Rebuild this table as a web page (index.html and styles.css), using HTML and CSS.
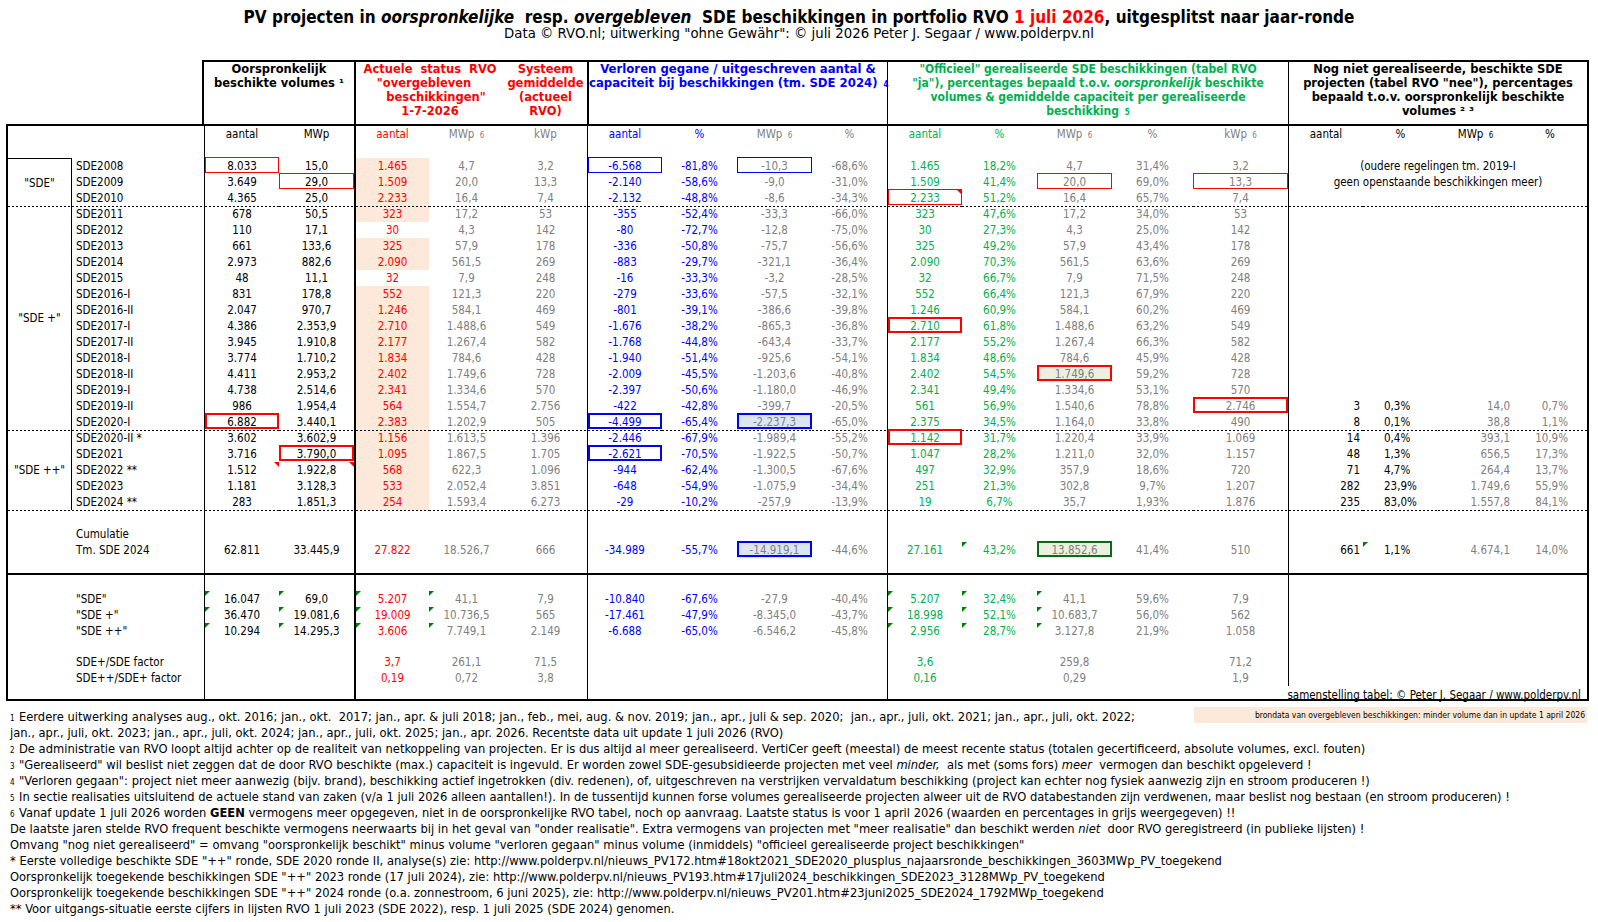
FILE: index.html
```html
<!DOCTYPE html>
<html lang="nl">
<head>
<meta charset="utf-8">
<title>PV projecten SDE beschikkingen</title>
<link rel="stylesheet" href="styles.css">
</head>
<body>
<div class="title">PV projecten in <i>oorspronkelijke</i>&nbsp; resp. <i>overgebleven</i>&nbsp; SDE beschikkingen in portfolio RVO <span class="red">1 juli 2026</span>, uitgesplitst naar jaar-ronde</div>
<div class="sub">Data © RVO.nl; uitwerking "ohne Gewähr": © juli 2026 Peter J. Segaar / www.polderpv.nl</div>

<div class="hdr">
  <div class="hc hk">Oorspronkelijk<br>beschikte volumes ¹</div>
  <div class="hc hr1">Actuele&nbsp; status&nbsp; RVO<br>"overgebleven&nbsp;&nbsp;&nbsp;<br>&nbsp;&nbsp;&nbsp;beschikkingen"<br>1-7-2026</div>
  <div class="hc hr2">Systeem<br>gemiddelde<br>(actueel<br>RVO)</div>
  <div class="hc hb">Verloren gegane / uitgeschreven aantal &amp;<br>capaciteit bij beschikkingen (tm. SDE 2024) <small class="fn">4</small></div>
  <div class="hc hg">"Officieel" gerealiseerde SDE beschikkingen (tabel RVO<br>"ja"), percentages bepaald t.o.v. <i>oorspronkelijk</i> beschikte<br>volumes &amp; gemiddelde capaciteit per gerealiseerde<br>beschikking <small class="fn">5</small></div>
  <div class="hc hn">Nog niet gerealiseerde, beschikte SDE<br>projecten (tabel RVO "nee"), percentages<br>bepaald t.o.v. oorspronkelijk beschikte<br>volumes ² ³</div>
</div>

<div class="sheet">
  <div class="r sh"><i></i><span>aantal</span><span>MWp</span><span>aantal</span><span>MWp <small>6</small></span><span>kWp</span><span>aantal</span><span>%</span><span>MWp <small>6</small></span><span>%</span><span>aantal</span><span>%</span><span>MWp <small>6</small></span><span>%</span><span>kWp <small>6</small></span><span>aantal</span><span>%</span><span>MWp <small>6</small></span><span>%</span></div>

  <div class="grp grp1">"SDE"</div>
  <div class="r"><span>SDE2008</span><span class="bx xr1">8.033</span><span>15,0</span><span class="pc">1.465</span><span>4,7</span><span>3,2</span><span class="bx xb1">-6.568</span><span>-81,8%</span><span class="bx xb1">-10,3</span><span>-68,6%</span><span>1.465</span><span>18,2%</span><span>4,7</span><span>31,4%</span><span>3,2</span><span class="ns">(oudere regelingen tm. 2019-I</span></div>
  <div class="r"><span>SDE2009</span><span>3.649</span><span class="bx xr1">29,0</span><span class="pc">1.509</span><span>20,0</span><span>13,3</span><span>-2.140</span><span>-58,6%</span><span>-9,0</span><span>-31,0%</span><span>1.509</span><span>41,4%</span><span class="bx xr1">20,0</span><span>69,0%</span><span class="bx xr1">13,3</span><span class="ns">geen openstaande beschikkingen meer)</span></div>
  <div class="r"><span>SDE2010</span><span>4.365</span><span>25,0</span><span class="pc">2.233</span><span>16,4</span><span>7,4</span><span>-2.132</span><span>-48,8%</span><span>-8,6</span><span>-34,3%</span><span class="bx xr1 tr">2.233</span><span>51,2%</span><span>16,4</span><span>65,7%</span><span>7,4</span><i></i><i></i><i></i><i></i></div>

  <div class="grp grp2 dt">"SDE +"</div>
  <div class="r dt"><span>SDE2011</span><span>678</span><span>50,5</span><span class="pc">323</span><span>17,2</span><span>53</span><span>-355</span><span>-52,4%</span><span>-33,3</span><span>-66,0%</span><span>323</span><span>47,6%</span><span>17,2</span><span>34,0%</span><span>53</span><i></i><i></i><i></i><i></i></div>
  <div class="r"><span>SDE2012</span><span>110</span><span>17,1</span><span>30</span><span>4,3</span><span>142</span><span>-80</span><span>-72,7%</span><span>-12,8</span><span>-75,0%</span><span>30</span><span>27,3%</span><span>4,3</span><span>25,0%</span><span>142</span><i></i><i></i><i></i><i></i></div>
  <div class="r"><span>SDE2013</span><span>661</span><span>133,6</span><span class="pc">325</span><span>57,9</span><span>178</span><span>-336</span><span>-50,8%</span><span>-75,7</span><span>-56,6%</span><span>325</span><span>49,2%</span><span>57,9</span><span>43,4%</span><span>178</span><i></i><i></i><i></i><i></i></div>
  <div class="r"><span>SDE2014</span><span>2.973</span><span>882,6</span><span class="pc">2.090</span><span>561,5</span><span>269</span><span>-883</span><span>-29,7%</span><span>-321,1</span><span>-36,4%</span><span>2.090</span><span>70,3%</span><span>561,5</span><span>63,6%</span><span>269</span><i></i><i></i><i></i><i></i></div>
  <div class="r"><span>SDE2015</span><span>48</span><span>11,1</span><span>32</span><span>7,9</span><span>248</span><span>-16</span><span>-33,3%</span><span>-3,2</span><span>-28,5%</span><span>32</span><span>66,7%</span><span>7,9</span><span>71,5%</span><span>248</span><i></i><i></i><i></i><i></i></div>
  <div class="r"><span>SDE2016-I</span><span>831</span><span>178,8</span><span class="pc">552</span><span>121,3</span><span>220</span><span>-279</span><span>-33,6%</span><span>-57,5</span><span>-32,1%</span><span>552</span><span>66,4%</span><span>121,3</span><span>67,9%</span><span>220</span><i></i><i></i><i></i><i></i></div>
  <div class="r"><span>SDE2016-II</span><span>2.047</span><span>970,7</span><span class="pc">1.246</span><span>584,1</span><span>469</span><span>-801</span><span>-39,1%</span><span>-386,6</span><span>-39,8%</span><span>1.246</span><span>60,9%</span><span>584,1</span><span>60,2%</span><span>469</span><i></i><i></i><i></i><i></i></div>
  <div class="r"><span>SDE2017-I</span><span>4.386</span><span>2.353,9</span><span class="pc">2.710</span><span>1.488,6</span><span>549</span><span>-1.676</span><span>-38,2%</span><span>-865,3</span><span>-36,8%</span><span class="bx xr2">2.710</span><span>61,8%</span><span>1.488,6</span><span>63,2%</span><span>549</span><i></i><i></i><i></i><i></i></div>
  <div class="r"><span>SDE2017-II</span><span>3.945</span><span>1.910,8</span><span class="pc">2.177</span><span>1.267,4</span><span>582</span><span>-1.768</span><span>-44,8%</span><span>-643,4</span><span>-33,7%</span><span>2.177</span><span>55,2%</span><span>1.267,4</span><span>66,3%</span><span>582</span><i></i><i></i><i></i><i></i></div>
  <div class="r"><span>SDE2018-I</span><span>3.774</span><span>1.710,2</span><span class="pc">1.834</span><span>784,6</span><span>428</span><span>-1.940</span><span>-51,4%</span><span>-925,6</span><span>-54,1%</span><span>1.834</span><span>48,6%</span><span>784,6</span><span>45,9%</span><span>428</span><i></i><i></i><i></i><i></i></div>
  <div class="r"><span>SDE2018-II</span><span>4.411</span><span>2.953,2</span><span class="pc">2.402</span><span>1.749,6</span><span>728</span><span>-2.009</span><span>-45,5%</span><span>-1.203,6</span><span>-40,8%</span><span>2.402</span><span>54,5%</span><span class="bx xr2 lg">1.749,6</span><span>59,2%</span><span>728</span><i></i><i></i><i></i><i></i></div>
  <div class="r"><span>SDE2019-I</span><span>4.738</span><span>2.514,6</span><span class="pc">2.341</span><span>1.334,6</span><span>570</span><span>-2.397</span><span>-50,6%</span><span>-1.180,0</span><span>-46,9%</span><span>2.341</span><span>49,4%</span><span>1.334,6</span><span>53,1%</span><span>570</span><i></i><i></i><i></i><i></i></div>
  <div class="r"><span>SDE2019-II</span><span>986</span><span>1.954,4</span><span class="pc">564</span><span>1.554,7</span><span>2.756</span><span>-422</span><span>-42,8%</span><span>-399,7</span><span>-20,5%</span><span>561</span><span>56,9%</span><span>1.540,6</span><span>78,8%</span><span class="bx xr2">2.746</span><span>3</span><span>0,3%</span><span>14,0</span><span>0,7%</span></div>
  <div class="r"><span>SDE2020-I</span><span class="bx xr2">6.882</span><span>3.440,1</span><span class="pc">2.383</span><span>1.202,9</span><span>505</span><span class="bx xb2">-4.499</span><span>-65,4%</span><span class="bx xb2 lb">-2.237,3</span><span>-65,0%</span><span>2.375</span><span>34,5%</span><span>1.164,0</span><span>33,8%</span><span>490</span><span>8</span><span>0,1%</span><span>38,8</span><span>1,1%</span></div>

  <div class="grp grp3 dt">"SDE ++"</div>
  <div class="r dt"><span>SDE2020-II *</span><span>3.602</span><span>3.602,9</span><span class="pc">1.156</span><span>1.613,5</span><span>1.396</span><span>-2.446</span><span>-67,9%</span><span>-1.989,4</span><span>-55,2%</span><span class="bx xr2">1.142</span><span>31,7%</span><span>1.220,4</span><span>33,9%</span><span>1.069</span><span>14</span><span>0,4%</span><span>393,1</span><span>10,9%</span></div>
  <div class="r"><span>SDE2021</span><span>3.716</span><span class="bx xr2">3.790,0</span><span class="pc">1.095</span><span>1.867,5</span><span>1.705</span><span class="bx xb2">-2.621</span><span>-70,5%</span><span>-1.922,5</span><span>-50,7%</span><span>1.047</span><span>28,2%</span><span>1.211,0</span><span>32,0%</span><span>1.157</span><span>48</span><span>1,3%</span><span>656,5</span><span>17,3%</span></div>
  <div class="r"><span>SDE2022 **</span><span class="tr">1.512</span><span class="tr">1.922,8</span><span class="pc">568</span><span>622,3</span><span>1.096</span><span>-944</span><span>-62,4%</span><span>-1.300,5</span><span>-67,6%</span><span>497</span><span>32,9%</span><span>357,9</span><span>18,6%</span><span>720</span><span>71</span><span>4,7%</span><span>264,4</span><span>13,7%</span></div>
  <div class="r"><span>SDE2023</span><span>1.181</span><span>3.128,3</span><span class="pc">533</span><span>2.052,4</span><span>3.851</span><span>-648</span><span>-54,9%</span><span>-1.075,9</span><span>-34,4%</span><span>251</span><span>21,3%</span><span>302,8</span><span>9,7%</span><span>1.207</span><span>282</span><span>23,9%</span><span>1.749,6</span><span>55,9%</span></div>
  <div class="r"><span>SDE2024 **</span><span>283</span><span>1.851,3</span><span class="pc">254</span><span>1.593,4</span><span>6.273</span><span>-29</span><span>-10,2%</span><span>-257,9</span><span>-13,9%</span><span>19</span><span>6,7%</span><span>35,7</span><span>1,93%</span><span>1.876</span><span>235</span><span>83,0%</span><span>1.557,8</span><span>84,1%</span></div>

  <div class="grp gx dt"></div>
  <div class="r dt"><i></i><i></i><i></i><i></i><i></i><i></i><i></i><i></i><i></i><i></i><i></i><i></i><i></i><i></i><i></i><i></i><i></i><i></i><i></i></div>
  <div class="r"><span>Cumulatie</span><i></i><i></i><i></i><i></i><i></i><i></i><i></i><i></i><i></i><i></i><i></i><i></i><i></i><i></i><i></i><i></i><i></i><i></i></div>
  <div class="r"><span>Tm. SDE 2024</span><span>62.811</span><span>33.445,9</span><span>27.822</span><span>18.526,7</span><span>666</span><span>-34.989</span><span>-55,7%</span><span class="bx xb2 lb">-14.919,1</span><span>-44,6%</span><span>27.161</span><span class="tg">43,2%</span><span class="bx xg2 lg">13.852,6</span><span>41,4%</span><span>510</span><span>661</span><span class="tg">1,1%</span><span>4.674,1</span><span>14,0%</span></div>
  <div class="r"><i></i><i></i><i></i><i></i><i></i><i></i><i></i><i></i><i></i><i></i><i></i><i></i><i></i><i></i><i></i><i></i><i></i><i></i><i></i></div>

  <div class="grp gx tk"></div>
  <div class="r tk"><i></i><i></i><i></i><i></i><i></i><i></i><i></i><i></i><i></i><i></i><i></i><i></i><i></i><i></i><i></i><i></i><i></i><i></i><i></i></div>
  <div class="r"><span>"SDE"</span><span class="tg">16.047</span><span class="tg">69,0</span><span class="tg">5.207</span><span class="tg">41,1</span><span>7,9</span><span>-10.840</span><span>-67,6%</span><span>-27,9</span><span>-40,4%</span><span class="tg">5.207</span><span class="tg">32,4%</span><span class="tg">41,1</span><span>59,6%</span><span>7,9</span><i></i><i></i><i></i><i></i></div>
  <div class="r"><span>"SDE +"</span><span class="tg">36.470</span><span class="tg">19.081,6</span><span class="tg">19.009</span><span class="tg">10.736,5</span><span>565</span><span>-17.461</span><span>-47,9%</span><span>-8.345,0</span><span>-43,7%</span><span class="tg">18.998</span><span class="tg">52,1%</span><span class="tg">10.683,7</span><span>56,0%</span><span>562</span><i></i><i></i><i></i><i></i></div>
  <div class="r"><span>"SDE ++"</span><span class="tg">10.294</span><span class="tg">14.295,3</span><span class="tg">3.606</span><span class="tg">7.749,1</span><span>2.149</span><span>-6.688</span><span>-65,0%</span><span>-6.546,2</span><span>-45,8%</span><span class="tg">2.956</span><span class="tg">28,7%</span><span class="tg">3.127,8</span><span>21,9%</span><span>1.058</span><i></i><i></i><i></i><i></i></div>
  <div class="r"><i></i><i></i><i></i><i></i><i></i><i></i><i></i><i></i><i></i><i></i><i></i><i></i><i></i><i></i><i></i><i></i><i></i><i></i><i></i></div>
  <div class="r"><span>SDE+/SDE factor</span><i></i><i></i><span>3,7</span><span>261,1</span><span>71,5</span><i></i><i></i><i></i><i></i><span>3,6</span><i></i><span>259,8</span><i></i><span>71,2</span><i></i><i></i><i></i><i></i></div>
  <div class="r"><span>SDE++/SDE+ factor</span><i></i><i></i><span>0,19</span><span>0,72</span><span>3,8</span><i></i><i></i><i></i><i></i><span>0,16</span><i></i><span>0,29</span><i></i><span>1,9</span><i></i><i></i><i></i><i></i></div>
  <div class="r"><i></i><i></i><i></i><i></i><i></i><i></i><i></i><i></i><i></i><i></i><i></i><i></i><i></i><i></i><span class="sam">samenstelling tabel: © Peter J. Segaar / www.polderpv.nl</span></div>
</div>

<div class="notes">
  <div class="fl first"><span><span class="mk">1</span>Eerdere uitwerking analyses aug., okt. 2016; jan., okt.&nbsp; 2017; jan., apr. &amp; juli 2018; jan., feb., mei, aug. &amp; nov. 2019; jan., apr., juli &amp; sep. 2020;&nbsp; jan., apr., juli, okt. 2021; jan., apr., juli, okt. 2022;</span><span class="note">brondata van overgebleven beschikkingen: minder volume dan in update 1 april 2026</span></div>
  <div class="fl">jan., apr., juli, okt. 2023; jan., apr., juli, okt. 2024; jan., apr., juli, okt. 2025; jan., apr. 2026. Recentste data uit update 1 juli 2026 (RVO)</div>
  <div class="fl"><span class="mk">2</span>De administratie van RVO loopt altijd achter op de realiteit van netkoppeling van projecten. Er is dus altijd al meer gerealiseerd. VertiCer geeft (meestal) de meest recente status (totalen gecertificeerd, absolute volumes, excl. fouten)</div>
  <div class="fl"><span class="mk">3</span>"Gerealiseerd" wil beslist niet zeggen dat de door RVO beschikte (max.) capaciteit is ingevuld. Er worden zowel SDE-gesubsidieerde projecten met veel <i>minder,</i>&nbsp; als met (soms fors) <i>meer</i>&nbsp; vermogen dan beschikt opgeleverd !</div>
  <div class="fl"><span class="mk">4</span>"Verloren gegaan": project niet meer aanwezig (bijv. brand), beschikking actief ingetrokken (div. redenen), of, uitgeschreven na verstrijken vervaldatum beschikking (project kan echter nog fysiek aanwezig zijn en stroom produceren !)</div>
  <div class="fl"><span class="mk">5</span>In sectie realisaties uitsluitend de actuele stand van zaken (v/a 1 juli 2026 alleen aantallen!). In de tussentijd kunnen forse volumes gerealiseerde projecten alweer uit de RVO databestanden zijn verdwenen, maar beslist nog bestaan (en stroom produceren) !</div>
  <div class="fl"><span class="mk">6</span>Vanaf update 1 juli 2026 worden <b>GEEN</b> vermogens meer opgegeven, niet in de oorspronkelijke RVO tabel, noch op aanvraag. Laatste status is voor 1 april 2026 (waarden en percentages in grijs weergegeven) !!</div>
  <div class="fl">De laatste jaren stelde RVO frequent beschikte vermogens neerwaarts bij in het geval van "onder realisatie". Extra vermogens van projecten met "meer realisatie" dan beschikt werden <i>niet</i>&nbsp; door RVO geregistreerd (in publieke lijsten) !</div>
  <div class="fl">Omvang "nog niet gerealiseerd" = omvang "oorspronkelijk beschikt" minus volume "verloren gegaan" minus volume (inmiddels) "officieel gerealiseerde project beschikkingen"</div>
  <div class="fl">* Eerste volledige beschikte SDE "++" ronde, SDE 2020 ronde II, analyse(s) zie: http://www.polderpv.nl/nieuws_PV172.htm#18okt2021_SDE2020_plusplus_najaarsronde_beschikkingen_3603MWp_PV_toegekend</div>
  <div class="fl">Oorspronkelijk toegekende beschikkingen SDE "++" 2023 ronde (17 juli 2024), zie: http://www.polderpv.nl/nieuws_PV193.htm#17juli2024_beschikkingen_SDE2023_3128MWp_PV_toegekend</div>
  <div class="fl">Oorspronkelijk toegekende beschikkingen SDE "++" 2024 ronde (o.a. zonnestroom, 6 juni 2025), zie: http://www.polderpv.nl/nieuws_PV201.htm#23juni2025_SDE2024_1792MWp_toegekend</div>
  <div class="fl">** Voor uitgangs-situatie eerste cijfers in lijsten RVO 1 juli 2023 (SDE 2022), resp. 1 juli 2025 (SDE 2024) genomen.</div>
</div>
</body>
</html>
```

FILE: styles.css
```css
* { box-sizing: border-box; }
body {
  margin: 0;
  background: #fff;
  color: #000;
  font-family: "DejaVu Sans Condensed", "DejaVu Sans", sans-serif;
  font-stretch: condensed;
  font-size: 11.5px;
}
i, b { font-style: normal; }
.title i, .hg i, .notes i { font-style: italic; }
.notes b { font-weight: bold; }

.title {
  padding-top: 8px;
  height: 26px;
  line-height: 18px;
  font-size: 17px;
  font-weight: bold;
  text-align: center;
  white-space: nowrap;
}
.red { color: #f00; }
.sub {
  height: 16px;
  line-height: 16px;
  font-family: "DejaVu Sans", sans-serif;
  font-stretch: normal;
  font-size: 13.3px;
  text-align: center;
  white-space: nowrap;
}

/* header block */
.hdr {
  margin: 18px 0 0 202px;
  width: 1387px;
  height: 64px;
  border: 2px solid #000;
  border-bottom: 0;
  display: grid;
  grid-template-columns: 150px 150px 83px 300px 401px 299px;
  font-weight: bold;
  line-height: 14px;
  text-align: center;
  white-space: nowrap;
}
.hc {
  font-family: "DejaVu Sans", sans-serif;
  font-stretch: normal;
  font-size: 11.5px;
}
.hr1, .hr2 { color: #f00; }
.hr1 { border-left: 2px solid #000; }
.hb {
  border-left: 2px solid #000;
  color: #0000ff;
  font-family: "DejaVu Sans Condensed", "DejaVu Sans", sans-serif;
  font-stretch: condensed;
  font-size: 13px;
}
.hg {
  border-left: 1px solid #000;
  color: #00b050;
  font-family: "DejaVu Sans Condensed", "DejaVu Sans", sans-serif;
  font-stretch: condensed;
  font-size: 12px;
}
.hn { border-left: 1px solid #000; }
.fn { font-size: 8px; }

/* sheet */
.sheet {
  margin-left: 6px;
  width: 1583px;
  border: 2px solid #000;
  display: grid;
  grid-template-columns: 64px 132px 75px 75px 75px 75px 83px 75px 75px 75px 75px 75px 75px 75px 81px 95px 75px 75px 75px 74px;
  grid-template-rows: 32px repeat(22, 16px) 16px 16px 16px 15px 18px 16px 16px 16px 15px 16px 16px 13px;
}
.r { display: contents; }
.r > * {
  display: block;
  line-height: 16px;
  text-align: center;
  white-space: nowrap;
}
.r > :nth-child(1) { grid-column-start: 2; text-align: left; padding-left: 4px; }
.r > :nth-child(2),
.r > :nth-child(7),
.r > :nth-child(11),
.r > :nth-child(16) { border-left: 1px solid #000; }
.r > :nth-child(4) { border-left: 2px solid #000; color: #f00; }
.r > :nth-child(5), .r > :nth-child(6),
.r > :nth-child(9), .r > :nth-child(10),
.r > :nth-child(13), .r > :nth-child(14), .r > :nth-child(15),
.r > :nth-child(18), .r > :nth-child(19) { color: #808080; }
.r > :nth-child(7), .r > :nth-child(8) { color: #0000ff; }
.r > :nth-child(11), .r > :nth-child(12) { color: #00b050; }
.r > :nth-child(16) { text-align: right; padding-right: 3px; }
.r > :nth-child(17) { text-align: left; padding-left: 21px; }
.r > :nth-child(18) { text-align: right; padding-right: 3px; }
.r > :nth-child(19) { text-align: right; padding-right: 19px; }

.sh > * { text-align: center !important; padding: 0 !important; }
.sh > :nth-child(n+16) { color: #000 !important; }
small { font-size: 8px; margin-left: 2px; }

.r > .ns { grid-column: span 4; text-align: center; padding: 0; color: #000; }
.r > .sam {
  grid-column: span 5;
  text-align: right;
  padding-right: 6px;
  color: #000;
  line-height: 18px;
}

.grp {
  grid-column: 1;
  border-right: 1px solid #000;
  display: flex;
  align-items: center;
  justify-content: center;
  white-space: nowrap;
}
.grp1 { grid-row: span 3; border-top: 1px solid #000; }
.grp2 { grid-row: span 14; }
.grp3 { grid-row: span 5; }
.gx { border-right: 0; }

.dt > *, .grp.dt {
  background-image: repeating-linear-gradient(90deg, #000 0 2px, transparent 2px 4px);
  background-size: 100% 1px;
  background-repeat: no-repeat;
  background-position: left top;
}
.tk > *, .grp.tk { border-top: 2px solid #000; }

.pc { background-color: #fde9d9; }
.lb { background-color: #dce6f1; }
.lg { background-color: #ebf1de; }

.bx, .tg, .tr { position: relative; }
.bx::after {
  content: "";
  position: absolute;
  left: 0; right: 0; top: -1px; bottom: 1px;
  border: 1px solid #f00;
  pointer-events: none;
}
.bx.xr2::after { border: 2px solid #f00; }
.bx.xb1::after { border: 1px solid #0000ff; }
.bx.xb2::after { border: 2px solid #0000ff; }
.bx.xg2::after { border: 2px solid #0a6a1a; }
.tg::before {
  content: "";
  position: absolute;
  left: 0; top: 0;
  border-top: 5px solid #008000;
  border-right: 5px solid transparent;
}
.tr::before {
  content: "";
  position: absolute;
  right: 0; top: 0;
  border-top: 5px solid #f00;
  border-left: 5px solid transparent;
  z-index: 1;
}

/* footnotes */
.notes {
  width: 1587px;
  margin-top: 8px;
  padding-left: 10px;
  font-size: 12.8px;
  line-height: 16px;
  white-space: nowrap;
}
.fl { height: 16px; }
.fl.first { display: flex; align-items: flex-start; }
.mk { display: inline-block; width: 9px; font-size: 8px; }
.note {
  margin-left: auto;
  margin-top: -2px;
  width: 393px;
  height: 16px;
  background: #fde9d9;
  font-size: 8.5px;
  line-height: 16px;
  text-align: right;
  padding-right: 2px;
}
```
